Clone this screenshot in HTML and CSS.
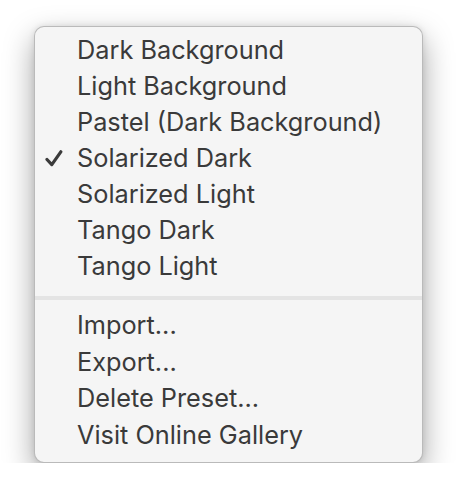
FILE: index.html
```html
<!DOCTYPE html>
<html>
<head>
<meta charset="utf-8">
<link rel="stylesheet" href="styles.css">
</head>
<body>
<div class="menu">
  <ul class="section section-presets">
    <li class="item"><span class="mark"></span><span class="label">Dark Background</span></li>
    <li class="item"><span class="mark"></span><span class="label">Light Background</span></li>
    <li class="item"><span class="mark"></span><span class="label">Pastel (Dark Background)</span></li>
    <li class="item"><span class="mark"><svg width="18" height="17" viewBox="0 0 18 17"><path d="M2 9.5 L6.8 14.6 L15.8 1.8" fill="none" stroke="#3b3b3b" stroke-width="3.2" stroke-linecap="round" stroke-linejoin="round"/></svg></span><span class="label">Solarized Dark</span></li>
    <li class="item"><span class="mark"></span><span class="label">Solarized Light</span></li>
    <li class="item"><span class="mark"></span><span class="label">Tango Dark</span></li>
    <li class="item"><span class="mark"></span><span class="label">Tango Light</span></li>
  </ul>
  <div class="separator"></div>
  <ul class="section section-actions">
    <li class="item"><span class="mark"></span><span class="label">Import...</span></li>
    <li class="item"><span class="mark"></span><span class="label">Export...</span></li>
    <li class="item"><span class="mark"></span><span class="label">Delete Preset...</span></li>
    <li class="item"><span class="mark"></span><span class="label">Visit Online Gallery</span></li>
  </ul>
</div>
</body>
</html>
```

FILE: styles.css
```css
html, body {
  margin: 0;
  padding: 0;
  background: #ffffff;
}

body {
  padding: 26px 0 0 34px;
  font-family: "Inter", "Liberation Sans", sans-serif;
}

.menu {
  box-sizing: border-box;
  width: 389px;
  height: 437px;
  background: #f5f5f5;
  border: 1px solid rgba(0, 0, 0, 0.24);
  border-radius: 10px;
  box-shadow: 0 12px 30px rgba(0, 0, 0, 0.36), 0 0 6px rgba(0, 0, 0, 0.1);
  padding: 5px 0 9px 0;
  display: flex;
  flex-direction: column;
}

.section {
  list-style: none;
  margin: 0;
  padding: 0;
}

.item {
  display: flex;
  align-items: center;
  height: 36px;
  color: #3a3a3a;
  font-size: 25.3px;
  line-height: 36px;
}

.section-actions .item {
  height: 36.5px;
}

.mark {
  box-sizing: border-box;
  width: 42px;
  padding-left: 10px;
  display: flex;
  align-items: center;
  flex-shrink: 0;
}

.mark svg {
  display: block;
  margin-top: 1px;
}

.label {
  white-space: nowrap;
}

.separator {
  height: 4px;
  background: #e4e4e4;
  margin: 12px 0 7px 0;
}
```
